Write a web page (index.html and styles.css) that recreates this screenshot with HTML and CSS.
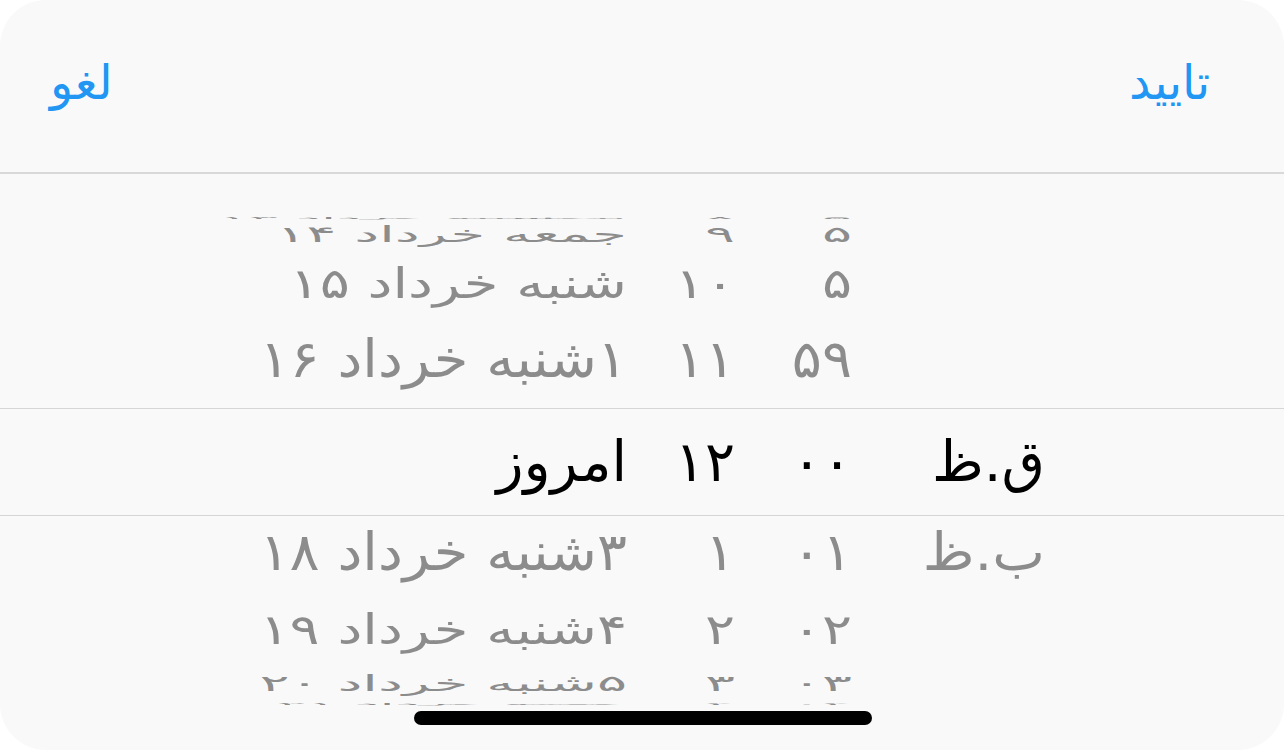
FILE: index.html
```html
<!DOCTYPE html>
<html lang="fa">
<head>
<meta charset="utf-8">
<title>Date picker</title>
<link rel="stylesheet" href="styles.css">
</head>
<body>
<div class="sheet">
  <header class="bar">
    <span class="btn">لغو</span>
    <span class="btn">تایید</span>
  </header>
  <div class="picker">
    <div class="row r0">
      <span class="c date">پنجشنبه خرداد ۱۳</span><span class="c hour">۸</span><span class="c min">۵</span><span class="c ampm"></span>
    </div>
    <div class="row r1">
      <span class="c date">جمعه خرداد ۱۴</span><span class="c hour">۹</span><span class="c min">۵</span><span class="c ampm"></span>
    </div>
    <div class="row r2">
      <span class="c date">شنبه خرداد ۱۵</span><span class="c hour">۱۰</span><span class="c min">۵</span><span class="c ampm"></span>
    </div>
    <div class="row r3">
      <span class="c date">۱شنبه خرداد ۱۶</span><span class="c hour">۱۱</span><span class="c min">۵۹</span><span class="c ampm"></span>
    </div>
    <div class="row sel">
      <span class="c date">امروز</span><span class="c hour">۱۲</span><span class="c min">۰۰</span><span class="c ampm">ق.ظ</span>
    </div>
    <div class="row r5">
      <span class="c date">۳شنبه خرداد ۱۸</span><span class="c hour">۱</span><span class="c min">۰۱</span><span class="c ampm">ب.ظ</span>
    </div>
    <div class="row r6">
      <span class="c date">۴شنبه خرداد ۱۹</span><span class="c hour">۲</span><span class="c min">۰۲</span><span class="c ampm"></span>
    </div>
    <div class="row r7">
      <span class="c date">۵شنبه خرداد ۲۰</span><span class="c hour">۳</span><span class="c min">۰۳</span><span class="c ampm"></span>
    </div>
    <div class="row r8">
      <span class="c date">جمعه خرداد ۲۱</span><span class="c hour">۴</span><span class="c min">۰۴</span><span class="c ampm"></span>
    </div>
  </div>
  <div class="home"></div>
</div>
</body>
</html>
```
FILE: styles.css
```css
html, body {
  margin: 0;
  padding: 0;
  background: #ffffff;
}
body {
  font-family: "DejaVu Sans", "Noto Sans", sans-serif;
}
.sheet {
  position: relative;
  width: 1284px;
  height: 750px;
  background: #f9f9f9;
  border-radius: 46px;
  overflow: hidden;
}
.bar {
  height: 174px;
  border-bottom: 2px solid #d9d9d9;
  display: flex;
  justify-content: space-between;
  align-items: center;
  padding: 0 74px 8px 50px;
  box-sizing: border-box;
}
.btn {
  color: #2196f3;
  font-size: 48px;
  line-height: 1;
}
.picker {
  padding-top: 36px;
  display: flex;
  flex-direction: column;
}
.row {
  display: grid;
  grid-template-columns: 627px 108px 117px 193px 1fr;
  grid-template-rows: minmax(0, 1fr);
  align-items: center;
  color: #8c8c8c;
  font-size: 56px;
  overflow: hidden;
}
.c {
  display: block;
  white-space: nowrap;
  line-height: 1;
  direction: ltr;
  text-align: right;
  transform-origin: right center;
}
.row .date { unicode-bidi: plaintext; }

.r0 { height: 10px; }
.r0 .c { transform: translateY(3px) scale(1, 0.05); }
.r1 { height: 30px; }
.r1 .c { transform: translateY(-1px) scale(1, 0.4); }
.r2 { height: 74px; }
.r2 .c { transform: translateY(-3px) scale(1, 0.74); }
.r3 { height: 84px; }
.r3 .c { transform: translateY(-7px) scale(1, 0.93); }
.sel {
  height: 108px;
  color: #000000;
  border-top: 1px solid #d6d6d6;
  border-bottom: 1px solid #d6d6d6;
  box-sizing: border-box;
}
.r5 { height: 74px; }
.r5 .c { transform: translateY(-1px) scale(1, 0.93); }
.r6 { height: 78px; }
.r6 .c { transform: translateY(1px) scale(1, 0.74); }
.r7 { height: 34px; }
.r7 .c { transform: translateY(-2px) scale(1, 0.4); }
.r8 { height: 10px; }
.r8 .c { transform: translateY(-3px) scale(1, 0.05); }

.home {
  position: absolute;
  left: 414px;
  bottom: 25px;
  width: 458px;
  height: 14px;
  border-radius: 7px;
  background: #000000;
}
```
